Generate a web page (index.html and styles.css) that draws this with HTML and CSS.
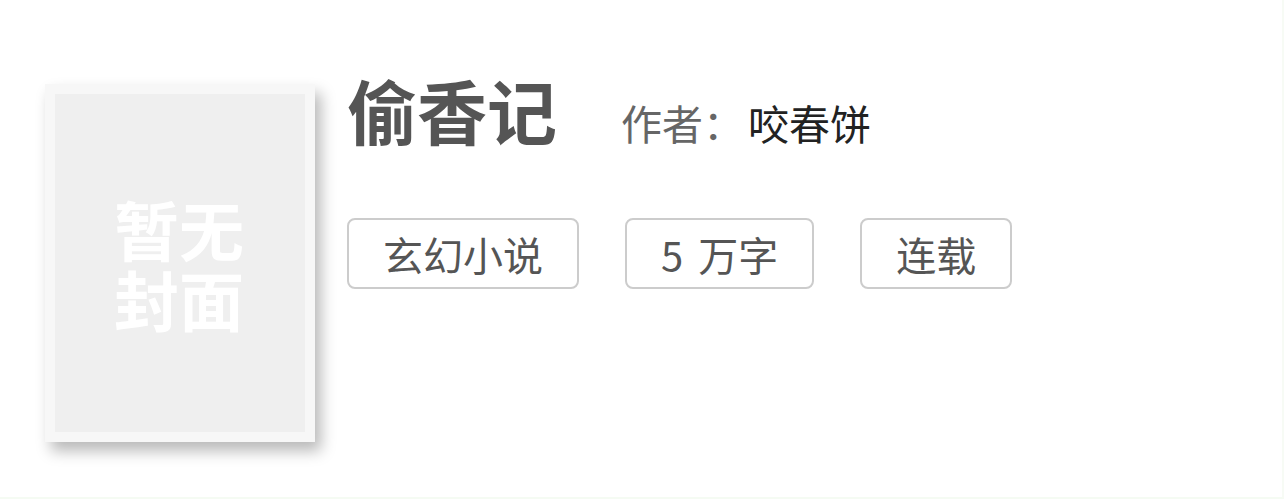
FILE: index.html
```html
<!DOCTYPE html>
<html lang="zh-CN">
<head>
    <meta charset="UTF-8">
    <meta name="viewport" content="width=device-width, initial-scale=1.0">
    <title>偷香记</title>
    <link rel="stylesheet" href="styles.css">
</head>
<body>
    <div class="book">
        <div class="cover">
            <div class="cover-inner">
                <div class="cover-text">
                    <div>暂无</div>
                    <div>封面</div>
                </div>
            </div>
        </div>
        <div class="info">
            <div class="head">
                <h1 class="title">偷香记</h1>
                <div class="author"><span class="label">作者：</span>咬春饼</div>
            </div>
            <div class="tags">
                <span class="tag">玄幻小说</span>
                <span class="tag words">5 万字</span>
                <span class="tag">连载</span>
            </div>
        </div>
    </div>
</body>
</html>
```

FILE: styles.css
```css
body {
    font-family: "Noto Sans CJK SC", "Noto Sans", sans-serif;
    background-color: #fff;
    margin: 0;
    padding: 0;
}

.book {
    display: flex;
    padding: 84px 0 0 45px;
    height: 413px;
    border-right: 2px solid #f7fbf5;
    border-bottom: 2px solid #f5fbf3;
}

.cover {
    width: 270px;
    height: 358px;
    box-sizing: border-box;
    padding: 10px;
    background: #f7f7f7;
    box-shadow: 6px 9px 14px rgba(0, 0, 0, 0.28);
    flex-shrink: 0;
}

.cover-inner {
    height: 100%;
    background: #efefef;
    display: flex;
    align-items: center;
    justify-content: center;
}

.cover-text {
    color: #fff;
    font-size: 65px;
    font-weight: bold;
    line-height: 70px;
    margin-left: -2px;
}

.info {
    margin-left: 32px;
}

.head {
    display: flex;
    align-items: baseline;
}

.title {
    font-size: 70px;
    font-weight: bold;
    color: #555;
    margin: -20px 0 0 0;
    line-height: 1.3;
}

.author {
    font-size: 41px;
    color: #222;
    margin-left: 64px;
}

.author .label {
    color: #666;
    margin-right: 4px;
}

.tags {
    display: flex;
    gap: 46px;
    margin-top: 63px;
}

.tag {
    border: 2px solid #ccc;
    border-radius: 8px;
    height: 71px;
    box-sizing: border-box;
    padding: 0 34px;
    font-size: 40px;
    color: #555;
    display: flex;
    align-items: center;
    white-space: pre;
}

.tag.words {
    word-spacing: 6px;
}
```
